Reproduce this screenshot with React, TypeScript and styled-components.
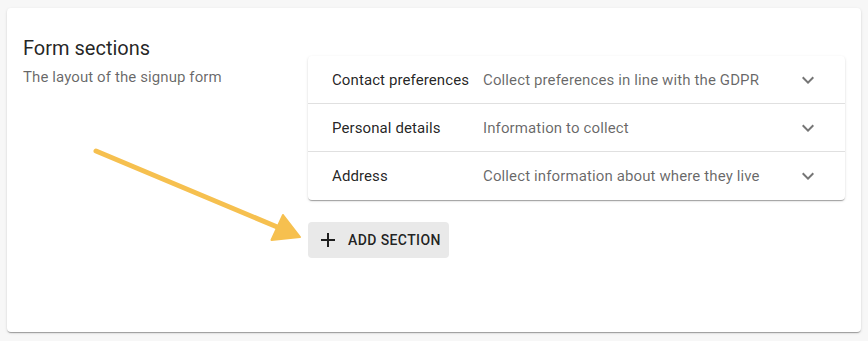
import React from "react";
import styled, { createGlobalStyle } from "styled-components";

const GlobalStyle = createGlobalStyle`
  html, body { margin: 0; padding: 0; background: #f7f7f7; }
  body { font-family: Roboto, "Liberation Sans", Arial, sans-serif; -webkit-font-smoothing: antialiased; }
`;

const Page = styled.div`
  position: relative;
  padding: 8px 7px 9px 7px;
  width: 868px;
  height: 341px;
  box-sizing: border-box;
`;

const Card = styled.section`
  background: #fff;
  border-radius: 4px;
  box-shadow: 0 2px 1px -1px rgba(0,0,0,0.2), 0 1px 1px 0 rgba(0,0,0,0.14), 0 1px 3px 0 rgba(0,0,0,0.12);
  height: 324px;
  box-sizing: border-box;
  padding: 24px 16px;
  display: grid;
  grid-template-columns: 285px 1fr;
  align-items: start;
`;

const Intro = styled.div`
  display: flex;
  flex-direction: column;
  gap: 3px;
`;

const Title = styled.h2`
  margin: 0;
  font-size: 20px;
  font-weight: 400;
  line-height: 32px;
  color: rgba(0,0,0,0.87);
`;

const Subtitle = styled.p`
  margin: 0;
  font-size: 15px;
  letter-spacing: 0.1px;
  line-height: 20px;
  color: rgba(0,0,0,0.6);
`;

const Content = styled.div`
  margin-top: 24px;
  display: flex;
  flex-direction: column;
  align-items: flex-start;
  gap: 22px;
`;

const Accordion = styled.div`
  width: 100%;
  background: #fff;
  border-radius: 4px;
  box-shadow: 0 2px 1px -1px rgba(0,0,0,0.2), 0 1px 1px 0 rgba(0,0,0,0.14), 0 1px 3px 0 rgba(0,0,0,0.12);
`;

const Row = styled.div<{ $last?: boolean }>`
  height: 48px;
  box-sizing: border-box;
  display: flex;
  align-items: center;
  padding: 0 25px 0 24px;
  border-bottom: ${(p) => (p.$last ? "none" : "1px solid #e0e0e0")};
  font-size: 15px;
`;

const RowTitle = styled.span`
  width: 151px;
  flex-shrink: 0;
  letter-spacing: 0.1px;
  color: rgba(0,0,0,0.87);
`;

const RowDesc = styled.span`
  flex: 1;
  letter-spacing: 0.12px;
  color: rgba(0,0,0,0.6);
`;

const IconBox = styled.svg<{ $color: string }>`
  width: 24px;
  height: 24px;
  fill: ${(p) => p.$color};
  flex-shrink: 0;
`;

const Button = styled.button`
  display: inline-flex;
  align-items: center;
  gap: 8px;
  height: 36px;
  padding: 0 8px;
  border: none;
  border-radius: 4px;
  background: #e9e9e9;
  color: rgba(0,0,0,0.87);
  font-family: inherit;
  font-size: 14px;
  font-weight: 500;
  letter-spacing: 0.4px;
  text-transform: uppercase;
  cursor: pointer;
`;

const Arrow = styled.svg`
  position: absolute;
  left: 0;
  top: 0;
  pointer-events: none;
`;

const sections = [
  { title: "Contact preferences", desc: "Collect preferences in line with the GDPR" },
  { title: "Personal details", desc: "Information to collect" },
  { title: "Address", desc: "Collect information about where they live" },
];

export default function App() {
  return (
    <Page>
      <GlobalStyle />
      <Card>
        <Intro>
          <Title>Form sections</Title>
          <Subtitle>The layout of the signup form</Subtitle>
        </Intro>
        <Content>
          <Accordion>
            {sections.map((s, i) => (
              <Row key={s.title} $last={i === sections.length - 1}>
                <RowTitle>{s.title}</RowTitle>
                <RowDesc>{s.desc}</RowDesc>
                <IconBox viewBox="0 0 24 24" $color="rgba(0,0,0,0.54)">
                  <path d="M16.59 8.59 12 13.17 7.41 8.59 6 10l6 6 6-6z" />
                </IconBox>
              </Row>
            ))}
          </Accordion>
          <Button>
            <IconBox viewBox="0 0 24 24" $color="rgba(0,0,0,0.87)">
              <path d="M19 13h-6v6h-2v-6H5v-2h6V5h2v6h6v2z" />
            </IconBox>
            Add section
          </Button>
        </Content>
      </Card>
      <Arrow width="868" height="341" viewBox="0 0 868 341">
        <line x1="96" y1="151" x2="282" y2="229" stroke="#f6c04f" strokeWidth="5" strokeLinecap="round" />
        <polygon points="271.5,240 283,215 300,237" fill="#f6c04f" stroke="#f6c04f" strokeWidth="2" strokeLinejoin="round" />
      </Arrow>
    </Page>
  );
}
